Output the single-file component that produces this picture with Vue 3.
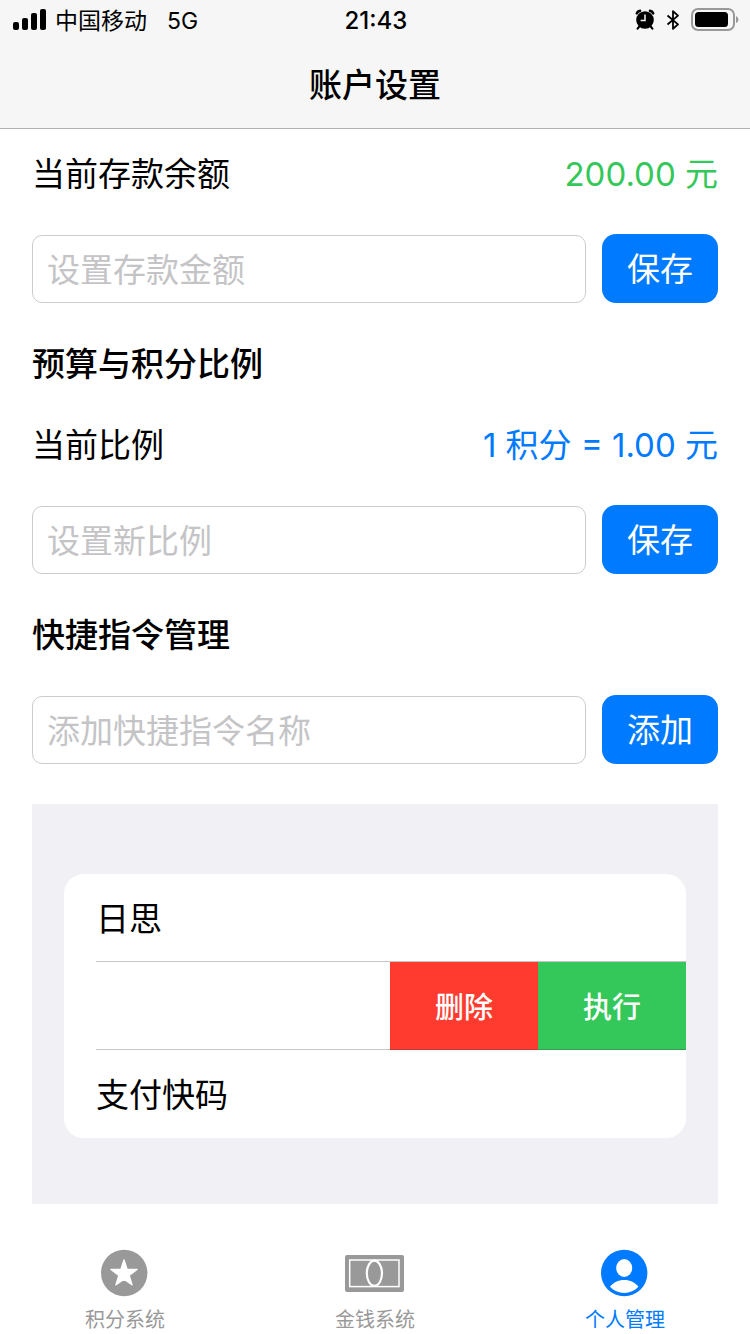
<script setup>
import { ref } from 'vue'

const deposit = ref('')
const ratio = ref('')
const shortcut = ref('')
</script>

<template>
  <div class="screen">
    <header class="top">
      <div class="status">
        <div class="status-left">
          <svg class="signal" width="34" height="22" viewBox="0 0 34 22" aria-hidden="true">
            <rect x="0" y="13" width="6" height="8" rx="2" />
            <rect x="9" y="9" width="6" height="12" rx="2" />
            <rect x="18" y="4" width="6" height="17" rx="2" />
            <rect x="27" y="0" width="6" height="21" rx="2" />
          </svg>
          <span class="carrier">中国移动</span>
          <span class="network">5G</span>
        </div>
        <time class="clock">21:43</time>
        <div class="status-right">
          <svg width="20" height="22" viewBox="0 0 20 22" aria-hidden="true">
            <path d="M1.8 4.4Q2.6 2.2 5 1.9M15 1.9Q17.4 2.2 18.2 4.4" fill="none" stroke="#000" stroke-width="2.6" stroke-linecap="round" />
            <path d="M4.4 17.4L2.6 19.6M15.6 17.4L17.4 19.6" stroke="#000" stroke-width="2.2" stroke-linecap="round" />
            <circle cx="10" cy="11" r="8.8" />
            <path d="M10 5.6V11.6H5.6" fill="none" stroke="#f6f6f6" stroke-width="1.5" />
          </svg>
          <svg width="14" height="20" viewBox="0 0 14 20" aria-hidden="true">
            <path d="M1.5 5.5L12 14.4L7 18.8V1.2L12 5.6L1.5 14.5" fill="none" stroke="#000" stroke-width="1.8" stroke-linejoin="round" />
          </svg>
          <svg width="48" height="24" viewBox="0 0 48 24" aria-hidden="true">
            <rect x="1" y="1" width="42" height="21" rx="6" fill="none" stroke="#999" stroke-width="2" />
            <rect x="4" y="4" width="33" height="15" rx="3.5" />
            <path d="M45 8Q47.5 9 47.5 11.5T45 15Z" fill="#999" />
          </svg>
        </div>
      </div>
      <h1 class="title">账户设置</h1>
    </header>

    <main class="content">
      <div class="row">
        <span>当前存款余额</span>
        <span class="green">200.00 元</span>
      </div>
      <form class="entry" @submit.prevent>
        <input v-model="deposit" type="text" placeholder="设置存款金额" aria-label="设置存款金额" />
        <button type="submit">保存</button>
      </form>

      <h2 class="heading">预算与积分比例</h2>
      <div class="row">
        <span>当前比例</span>
        <span class="blue">1 积分 = 1.00 元</span>
      </div>
      <form class="entry" @submit.prevent>
        <input v-model="ratio" type="text" placeholder="设置新比例" aria-label="设置新比例" />
        <button type="submit">保存</button>
      </form>

      <h2 class="heading">快捷指令管理</h2>
      <form class="entry" @submit.prevent>
        <input v-model="shortcut" type="text" placeholder="添加快捷指令名称" aria-label="添加快捷指令名称" />
        <button type="submit">添加</button>
      </form>

      <div class="panel">
        <ul class="list">
          <li class="item">日思</li>
          <li class="item swiped">
            <button type="button" class="action delete">删除</button>
            <button type="button" class="action run">执行</button>
          </li>
          <li class="item">支付快码</li>
        </ul>
      </div>
    </main>

    <nav class="tabs">
      <a class="tab" href="#points">
        <svg width="48" height="48" viewBox="1 0 48 48" aria-hidden="true">
          <circle cx="24.2" cy="24" r="23.2" fill="#999" />
          <path d="M24 11L27.1 20.4L37 20.5L29.1 26.4L32 35.8L24 30.2L16 35.8L18.9 26.4L11 20.5L20.9 20.4Z" fill="#fff" stroke="#fff" stroke-width="1.4" stroke-linejoin="round" />
        </svg>
        <span>积分系统</span>
      </a>
      <a class="tab" href="#money">
        <svg width="60" height="48" viewBox="1 0 60 48" aria-hidden="true">
          <rect x="1" y="6" width="59" height="37" rx="2" fill="#999" />
          <rect x="5.7" y="11" width="49.3" height="26.6" fill="none" stroke="#fff" stroke-width="1.5" />
          <ellipse cx="30.4" cy="24.3" rx="7.6" ry="12.6" fill="#999" stroke="#fff" stroke-width="2.2" />
        </svg>
        <span>金钱系统</span>
      </a>
      <a class="tab active" href="#me" aria-current="page">
        <svg width="48" height="48" viewBox="1 0 48 48" aria-hidden="true">
          <circle cx="24.2" cy="24" r="23.2" fill="#007aff" />
          <ellipse cx="24.2" cy="19" rx="8" ry="8.9" fill="#fff" />
          <path d="M10 37.8C13.2 33.5 18.2 31 24.2 31S35.2 33.5 38.4 37.8C34.7 41.8 29.7 44 24.2 44S13.7 41.8 10 37.8Z" fill="#fff" />
        </svg>
        <span>个人管理</span>
      </a>
    </nav>
  </div>
</template>

<style>
body {
  background: #fff;
}
</style>

<style scoped>
.screen {
  min-height: 100vh;
  display: flex;
  flex-direction: column;
  color: #000;
  font-family: Inter, "Noto Sans CJK SC", sans-serif;
  font-size: 33px;
  line-height: 39px;
}
.screen *,
.screen *::after {
  box-sizing: border-box;
}
.top {
  background: #f6f6f6;
  border-bottom: 1px solid #b2b2b2;
}
.status {
  display: grid;
  grid-template-columns: 1fr auto 1fr;
  align-items: center;
  height: 40px;
  padding: 0 11px 0 13px;
  font-size: 23px;
  line-height: 38px;
}
.status span,
.status time {
  padding-top: 2px;
}
.status-left,
.status-right {
  display: flex;
  align-items: center;
}
.carrier {
  margin-left: 8px;
}
.network {
  margin-left: 20px;
}
.clock {
  font-size: 24px;
  font-weight: 500;
}
.status-right {
  justify-content: flex-end;
  gap: 11px;
}
.title {
  margin: 0;
  padding-top: 2px;
  height: 88px;
  font-size: 33px;
  line-height: 86px;
  font-weight: 500;
  text-align: center;
}
.content {
  flex: 1;
  display: flex;
  flex-direction: column;
  gap: 40px;
  padding: 24px 32px 0;
}
.row {
  display: flex;
  justify-content: space-between;
  padding-top: 2px;
}
.green {
  color: #34c759;
}
.blue {
  color: #007aff;
}
.heading {
  margin: 0;
  padding-top: 2px;
  font-size: 33px;
  line-height: 39px;
  font-weight: 500;
}
.entry {
  display: flex;
  align-items: flex-end;
  gap: 16px;
}
.entry input {
  flex: 1;
  min-width: 0;
  height: 68px;
  padding: 2px 14px 0;
  border: 1px solid #ccc;
  border-radius: 10px;
  background: #fff;
  color: #000;
  font: inherit;
}
.entry input::placeholder {
  color: #c4c4c6;
  opacity: 1;
}
.entry button {
  height: 69px;
  padding: 2px 25px 0;
  border: 0;
  border-radius: 14px;
  background: #007aff;
  color: #fff;
  font: inherit;
}
.panel {
  padding: 70px 32px 66px;
  background: #f1f0f5;
}
.list {
  margin: 0;
  padding: 0;
  overflow: hidden;
  list-style: none;
  background: #fff;
  border-radius: 20px;
}
.item {
  position: relative;
  display: flex;
  align-items: center;
  height: 88px;
  padding: 2px 0 0 32px;
}
.item:not(:last-child)::after {
  content: "";
  position: absolute;
  left: 32px;
  right: 0;
  bottom: 0;
  height: 1px;
  background: rgba(60, 60, 67, 0.29);
}
.swiped {
  justify-content: flex-end;
  align-items: stretch;
  padding-top: 0;
}
.action {
  width: 148px;
  padding: 2px 0 0;
  border: 0;
  color: #fff;
  font: inherit;
  font-size: 29px;
  font-weight: 500;
}
.delete {
  background: #ff3b30;
}
.run {
  background: #34c759;
}
.tabs {
  display: grid;
  grid-template-columns: repeat(3, 1fr);
  height: 130px;
  padding-top: 45px;
}
.tab {
  display: flex;
  flex-direction: column;
  align-items: center;
  gap: 11px;
  color: #999;
  font-size: 20px;
  line-height: 24px;
  text-decoration: none;
}
.active {
  color: #007aff;
}
</style>
